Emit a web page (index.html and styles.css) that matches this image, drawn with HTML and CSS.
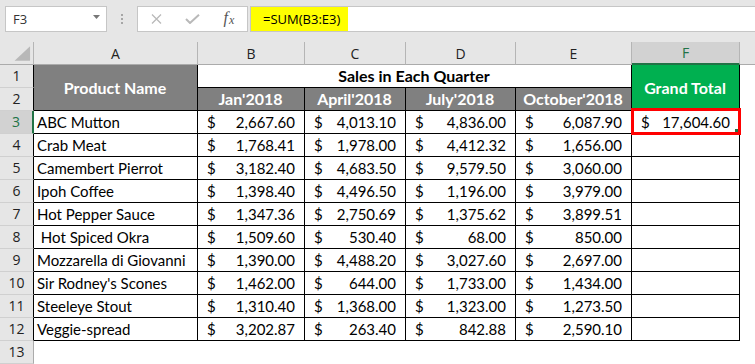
FILE: index.html
```html
<!DOCTYPE html>
<html lang="en">
<head>
    <meta charset="UTF-8">
    <meta name="viewport" content="width=device-width, initial-scale=1.0">
    <title>Sales in Each Quarter</title>
    <link rel="stylesheet" href="styles.css">
</head>
<body>
    <div class="formula-bar">
        <div class="name-box">
            <span>F3</span>
            <svg class="caret" width="7" height="4" viewBox="0 0 7 4"><polygon points="0,0 7,0 3.5,4" fill="#777"/></svg>
        </div>
        <div class="grip"><i></i><i></i><i></i></div>
        <div class="fx-buttons">
            <span class="fx-slot">
                <svg width="11" height="10" viewBox="0 0 11 10"><path d="M1 0.5 L10 9.5 M10 0.5 L1 9.5" stroke="#b9b9b9" stroke-width="1.3" fill="none"/></svg>
            </span>
            <span class="fx-slot">
                <svg width="15" height="10" viewBox="0 0 15 10"><path d="M1 5 L5 9 L14 0.8" stroke="#b9b9b9" stroke-width="2" fill="none"/></svg>
            </span>
            <span class="fx-slot"><span class="fx">f<sub>x</sub></span></span>
        </div>
        <div class="formula-input">
            <span class="highlight">=SUM(B3:E3)</span>
        </div>
    </div>

    <div class="sheet">
        <!-- column headers -->
        <div class="col-head corner">
            <svg width="34" height="22" viewBox="0 0 34 22"><polygon points="15,19 31,19 31,4" fill="#b8b8b8"/></svg>
        </div>
        <div class="col-head">A</div>
        <div class="col-head">B</div>
        <div class="col-head">C</div>
        <div class="col-head">D</div>
        <div class="col-head">E</div>
        <div class="col-head active">F</div>
        <div class="col-head last"></div>

        <!-- rows 1-2: table headings -->
        <div class="row-head">1</div>
        <div class="cell head gray tall">Product Name</div>
        <div class="cell head title">Sales in Each Quarter</div>
        <div class="cell head green tall">Grand Total</div>
        <div class="blank"></div>

        <div class="row-head">2</div>
        <div class="cell head gray">Jan'2018</div>
        <div class="cell head gray">April'2018</div>
        <div class="cell head gray">July'2018</div>
        <div class="cell head gray">October'2018</div>
        <div class="blank"></div>

        <!-- data rows -->
        <div class="row-head active">3</div>
        <div class="cell">ABC Mutton</div>
        <div class="cell acct"><span>$</span><span>2,667.60</span></div>
        <div class="cell acct"><span>$</span><span>4,013.10</span></div>
        <div class="cell acct"><span>$</span><span>4,836.00</span></div>
        <div class="cell acct"><span>$</span><span>6,087.90</span></div>
        <div class="cell acct selected"><span>$</span><span>17,604.60</span><div class="mark"></div><div class="handle"></div></div>
        <div class="blank"></div>

        <div class="row-head">4</div>
        <div class="cell">Crab Meat</div>
        <div class="cell acct"><span>$</span><span>1,768.41</span></div>
        <div class="cell acct"><span>$</span><span>1,978.00</span></div>
        <div class="cell acct"><span>$</span><span>4,412.32</span></div>
        <div class="cell acct"><span>$</span><span>1,656.00</span></div>
        <div class="cell"></div>
        <div class="blank"></div>

        <div class="row-head">5</div>
        <div class="cell">Camembert Pierrot</div>
        <div class="cell acct"><span>$</span><span>3,182.40</span></div>
        <div class="cell acct"><span>$</span><span>4,683.50</span></div>
        <div class="cell acct"><span>$</span><span>9,579.50</span></div>
        <div class="cell acct"><span>$</span><span>3,060.00</span></div>
        <div class="cell"></div>
        <div class="blank"></div>

        <div class="row-head">6</div>
        <div class="cell">Ipoh Coffee</div>
        <div class="cell acct"><span>$</span><span>1,398.40</span></div>
        <div class="cell acct"><span>$</span><span>4,496.50</span></div>
        <div class="cell acct"><span>$</span><span>1,196.00</span></div>
        <div class="cell acct"><span>$</span><span>3,979.00</span></div>
        <div class="cell"></div>
        <div class="blank"></div>

        <div class="row-head">7</div>
        <div class="cell">Hot Pepper Sauce</div>
        <div class="cell acct"><span>$</span><span>1,347.36</span></div>
        <div class="cell acct"><span>$</span><span>2,750.69</span></div>
        <div class="cell acct"><span>$</span><span>1,375.62</span></div>
        <div class="cell acct"><span>$</span><span>3,899.51</span></div>
        <div class="cell"></div>
        <div class="blank"></div>

        <div class="row-head">8</div>
        <div class="cell">&nbsp;Hot Spiced Okra</div>
        <div class="cell acct"><span>$</span><span>1,509.60</span></div>
        <div class="cell acct"><span>$</span><span>530.40</span></div>
        <div class="cell acct"><span>$</span><span>68.00</span></div>
        <div class="cell acct"><span>$</span><span>850.00</span></div>
        <div class="cell"></div>
        <div class="blank"></div>

        <div class="row-head">9</div>
        <div class="cell">Mozzarella di Giovanni</div>
        <div class="cell acct"><span>$</span><span>1,390.00</span></div>
        <div class="cell acct"><span>$</span><span>4,488.20</span></div>
        <div class="cell acct"><span>$</span><span>3,027.60</span></div>
        <div class="cell acct"><span>$</span><span>2,697.00</span></div>
        <div class="cell"></div>
        <div class="blank"></div>

        <div class="row-head">10</div>
        <div class="cell">Sir Rodney's Scones</div>
        <div class="cell acct"><span>$</span><span>1,462.00</span></div>
        <div class="cell acct"><span>$</span><span>644.00</span></div>
        <div class="cell acct"><span>$</span><span>1,733.00</span></div>
        <div class="cell acct"><span>$</span><span>1,434.00</span></div>
        <div class="cell"></div>
        <div class="blank"></div>

        <div class="row-head">11</div>
        <div class="cell">Steeleye Stout</div>
        <div class="cell acct"><span>$</span><span>1,310.40</span></div>
        <div class="cell acct"><span>$</span><span>1,368.00</span></div>
        <div class="cell acct"><span>$</span><span>1,323.00</span></div>
        <div class="cell acct"><span>$</span><span>1,273.50</span></div>
        <div class="cell"></div>
        <div class="blank"></div>

        <div class="row-head">12</div>
        <div class="cell">Veggie-spread</div>
        <div class="cell acct"><span>$</span><span>3,202.87</span></div>
        <div class="cell acct"><span>$</span><span>263.40</span></div>
        <div class="cell acct"><span>$</span><span>842.88</span></div>
        <div class="cell acct"><span>$</span><span>2,590.10</span></div>
        <div class="cell"></div>
        <div class="blank"></div>

        <div class="row-head empty">13</div>
    </div>
</body>
</html>
```

FILE: styles.css
```css
body {
    margin: 0;
    width: 755px;
    height: 364px;
    overflow: hidden;
    background-color: #ffffff;
    font-family: Lato, "Liberation Sans", sans-serif;
    color: #000000;
}

/* formula bar */
.formula-bar {
    height: 42px;
    box-sizing: border-box;
    padding-top: 6px;
    background-color: #e6e6e6;
    display: flex;
    align-items: flex-start;
}

.name-box {
    margin-left: 5px;
    width: 102px;
    height: 26px;
    box-sizing: border-box;
    border: 1px solid #c6c6c6;
    background-color: #ffffff;
    display: flex;
    align-items: center;
    justify-content: space-between;
    padding: 0 6px 0 7px;
    font-family: "Open Sans", sans-serif;
    font-size: 13px;
    color: #333333;
}

.caret {
    margin-top: -4px;
}

.grip {
    width: 30px;
    height: 26px;
    display: flex;
    flex-direction: column;
    align-items: center;
    justify-content: center;
    gap: 2px;
}

.grip i {
    width: 2px;
    height: 2px;
    background-color: #a6a6a6;
}

.fx-buttons {
    width: 111px;
    height: 26px;
    box-sizing: border-box;
    border: 1px solid #c6c6c6;
    background-color: #ffffff;
    display: flex;
    align-items: center;
}

.fx-slot {
    flex: 1;
    display: flex;
    justify-content: center;
    align-items: center;
}

.fx {
    font-family: "Liberation Serif", serif;
    font-style: italic;
    font-size: 16px;
    color: #555555;
    margin-top: -2px;
}

.fx sub {
    font-size: 12px;
    vertical-align: -1px;
    margin-left: 1px;
}

.formula-input {
    flex: 1;
    margin-left: 2px;
    height: 26px;
    box-sizing: border-box;
    border: 1px solid #c6c6c6;
    border-right: none;
    background-color: #ffffff;
    display: flex;
    align-items: stretch;
}

.highlight {
    background-color: #ffff00;
    padding: 0 8px 0 12px;
    display: flex;
    align-items: center;
    font-family: "Open Sans", sans-serif;
    font-size: 13px;
}

/* grid */
.sheet {
    display: grid;
    grid-template-columns: 34px 164px 107px 101px 110px 116px 108px 1fr;
    grid-template-rows: repeat(14, 23px);
}

.col-head {
    background-color: #e6e6e6;
    border-right: 1px solid #b5b5b5;
    border-bottom: 1px solid #ababab;
    box-sizing: border-box;
    display: flex;
    align-items: center;
    justify-content: center;
    font-family: "Open Sans", sans-serif;
    font-size: 14px;
    color: #222222;
}

.col-head.corner {
    align-items: flex-start;
}

.col-head.active {
    background-color: #d2d2d2;
    color: #217346;
    border-bottom: 2px solid #217346;
}

.col-head.last {
    border-right: none;
}

.row-head {
    background-color: #e6e6e6;
    border-right: 1px solid #000000;
    border-bottom: 1px solid #d0d0d0;
    box-sizing: border-box;
    text-align: center;
    font-family: "Open Sans", sans-serif;
    font-size: 14px;
    line-height: 22px;
    color: #222222;
}

.row-head.active {
    background-color: #d2d2d2;
    color: #217346;
    border-right: 2px solid #217346;
}

.row-head.empty {
    border-right-color: #ababab;
}

.cell {
    border-right: 1px solid #000000;
    border-bottom: 1px solid #000000;
    box-sizing: border-box;
    padding: 0 4px 0 3px;
    font-size: 15px;
    line-height: 22px;
    white-space: nowrap;
    overflow: hidden;
}

.cell.acct {
    display: flex;
    justify-content: space-between;
    padding: 0 9px;
}

.cell.head {
    font-weight: bold;
    font-size: 16px;
    text-align: center;
}

.cell.gray {
    background-color: #808080;
    color: #ffffff;
}

.cell.green {
    background-color: #00b050;
    color: #ffffff;
}

.cell.title {
    grid-column: span 4;
}

.cell.tall {
    grid-row: span 2;
    display: flex;
    align-items: center;
    justify-content: center;
}

.cell.selected {
    position: relative;
    overflow: visible;
}

.mark {
    position: absolute;
    top: -3px;
    left: -1px;
    right: -2px;
    bottom: -2px;
    border: 3px solid #ff0000;
}

.handle {
    position: absolute;
    right: 1px;
    bottom: 1px;
    width: 3px;
    height: 3px;
    background-color: #217346;
}
```
